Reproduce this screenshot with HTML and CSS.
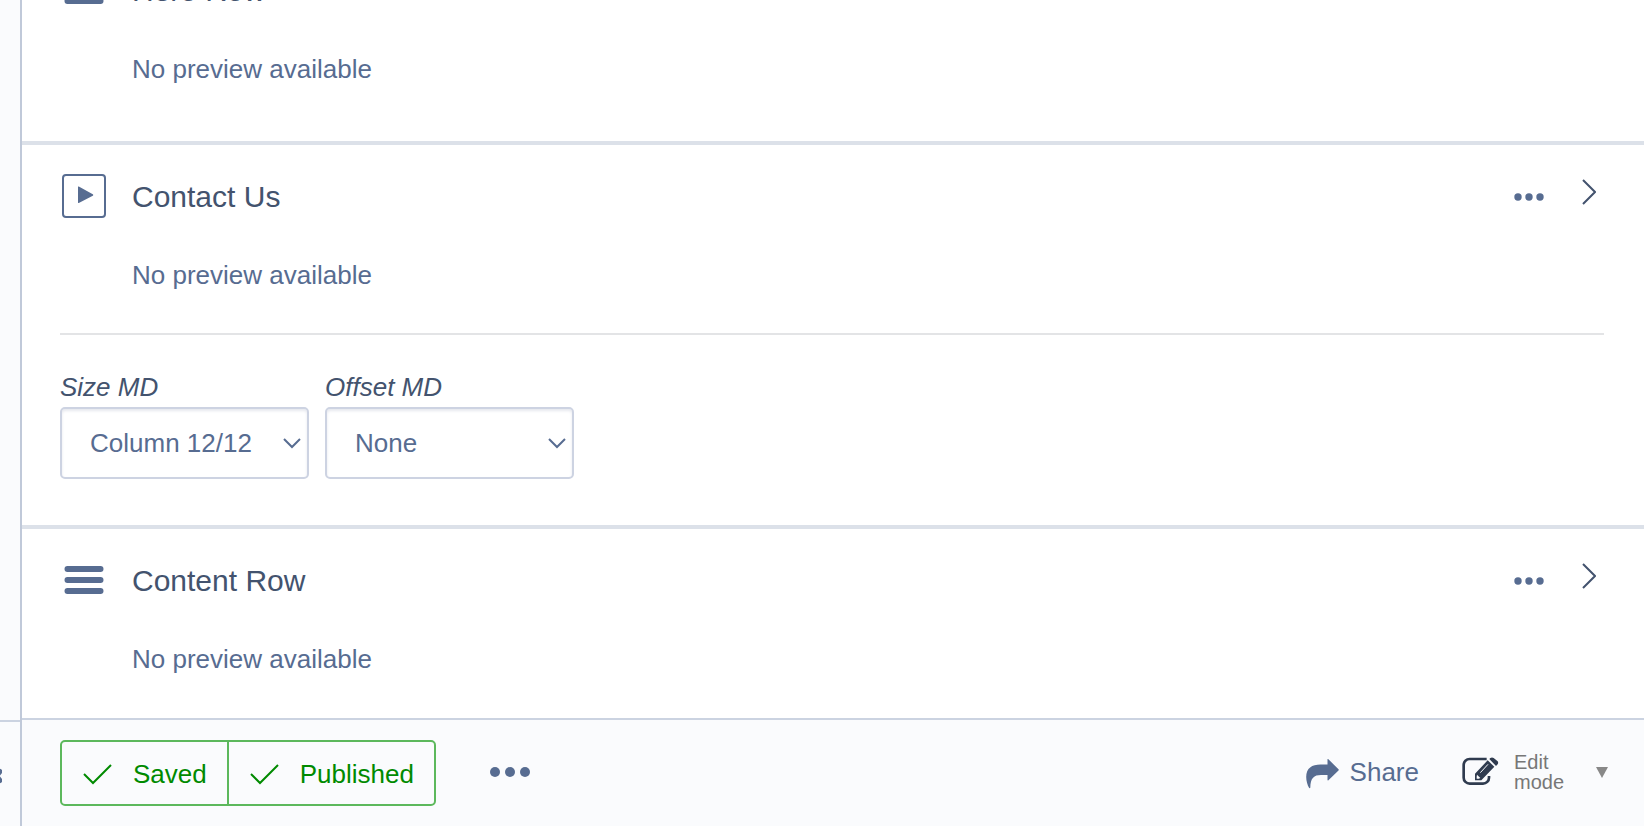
FILE: index.html
```
<!DOCTYPE html>
<html lang="en">
<head>
    <meta charset="UTF-8">
    <meta name="viewport" content="width=device-width, initial-scale=1.0">
    <title>Page Editor</title>
    <link rel="stylesheet" href="styles.css">
</head>
<body>
    <div class="editor">
        <aside class="sidebar">
            <div class="sidebar-tree"></div>
            <div class="sidebar-footer">
                <button class="collapse-btn" type="button" aria-label="Collapse">
                    <svg width="18" height="18" viewBox="0 0 18 18"><path d="M9 3L4 9l5 6M18 3l-5 6 5 6"/></svg>
                </button>
            </div>
        </aside>

        <main class="main">
            <div class="blocks">
                <div class="block-list">
                    <section class="block">
                        <header class="block-header">
                            <svg class="block-icon" viewBox="0 0 44 44"><path class="bar" d="M5.500 11h33M5.500 22h33M5.500 33h33"/></svg>
                            <h3>Hero Row</h3>
                        </header>
                        <p class="preview">No preview available</p>
                    </section>

                    <section class="block">
                        <header class="block-header">
                            <svg class="block-icon" viewBox="0 0 44 44">
                                <rect class="frame" x="1" y="1" width="42" height="42" rx="3"/>
                                <path class="play" d="M16 13v15.500a.5.5 0 0 0 .8.4l14-7.200a.8.8 0 0 0 0-1.400l-14-7.700a.5.5 0 0 0-.8.4z"/>
                            </svg>
                            <h3>Contact Us</h3>
                            <button class="more-btn" type="button" aria-label="More">
                                <svg width="30" height="8" viewBox="0 0 30 8"><circle cx="4" cy="4" r="3.700"/><circle cx="15" cy="4" r="3.700"/><circle cx="26" cy="4" r="3.700"/></svg>
                            </button>
                            <button class="open-btn" type="button" aria-label="Open">
                                <svg width="14" height="26" viewBox="0 0 14 26"><path d="M1 1l12 12L1 25"/></svg>
                            </button>
                        </header>
                        <p class="preview">No preview available</p>
                        <div class="block-options">
                            <div class="field">
                                <label for="size-md">Size MD</label>
                                <div class="select">
                                    <select id="size-md">
                                        <option>Column 12/12</option>
                                    </select>
                                    <svg width="18" height="12" viewBox="0 0 18 12"><path d="M1 2l8 8 8-8"/></svg>
                                </div>
                            </div>
                            <div class="field">
                                <label for="offset-md">Offset MD</label>
                                <div class="select">
                                    <select id="offset-md">
                                        <option>None</option>
                                    </select>
                                    <svg width="18" height="12" viewBox="0 0 18 12"><path d="M1 2l8 8 8-8"/></svg>
                                </div>
                            </div>
                        </div>
                    </section>

                    <section class="block">
                        <header class="block-header">
                            <svg class="block-icon" viewBox="0 0 44 44"><path class="bar" d="M5.500 11h33M5.500 22h33M5.500 33h33"/></svg>
                            <h3>Content Row</h3>
                            <button class="more-btn" type="button" aria-label="More">
                                <svg width="30" height="8" viewBox="0 0 30 8"><circle cx="4" cy="4" r="3.700"/><circle cx="15" cy="4" r="3.700"/><circle cx="26" cy="4" r="3.700"/></svg>
                            </button>
                            <button class="open-btn" type="button" aria-label="Open">
                                <svg width="14" height="26" viewBox="0 0 14 26"><path d="M1 1l12 12L1 25"/></svg>
                            </button>
                        </header>
                        <p class="preview">No preview available</p>
                    </section>
                </div>
            </div>

            <footer class="toolbar">
                <div class="btn-group">
                    <button type="button">
                        <svg width="30" height="22" viewBox="0 0 30 22"><path d="M1 11l9 9L28 2"/></svg>
                        Saved
                    </button>
                    <button type="button">
                        <svg width="30" height="22" viewBox="0 0 30 22"><path d="M1 11l9 9L28 2"/></svg>
                        Published
                    </button>
                </div>
                <button class="more-btn" type="button" aria-label="More actions">
                    <svg width="40" height="10" viewBox="0 0 40 10"><circle cx="5" cy="5" r="5"/><circle cx="20" cy="5" r="5"/><circle cx="35" cy="5" r="5"/></svg>
                </button>
                <button class="share-btn" type="button">
                    <svg width="33" height="34" viewBox="0 -4 33 34"><path d="M21.500 .5C21.500 0 22 0 22.400 .3L32.500 10.200q.6.600 0 1.200L22.400 21.200c-.4.400-.9.200-.9-.3V16H15C8 16 4.500 19 4.300 28.500c0 1-1 1-1.400.1C1.500 26 .2 22 .2 18 .2 9 6 5.500 14.500 5.500h7z"/></svg>
                    Share
                </button>
                <button class="mode-btn" type="button">
                    <svg class="edit-icon" width="38" height="31" viewBox="20 34 114 93">
                        <path class="sheet" d="M97 40H46a18 18 0 0 0-18 18v38a18 18 0 0 0 18 18h40a18 18 0 0 0 18-18V91"/>
                        <path class="pencil" d="M62 84L100 44l20 19L81 104H62zM105 40l3-3q5-3 10 0l12 10q3 4 0 9l-5 5z"/>
                        <path class="nib" d="M68 87l10 10-5 2h-6v-6z"/>
                        <path class="shine" d="M78 81L101 56"/>
                    </svg>
                    <span>Edit<br>mode</span>
                    <svg class="caret" width="12" height="11" viewBox="0 0 12 11"><path d="M0 0h12L6 11z"/></svg>
                </button>
            </footer>
        </main>
    </div>
</body>
</html>
```
FILE: styles.css
```
* {
    box-sizing: border-box;
}

body {
    margin: 0;
    font-family: "Liberation Sans", Arial, sans-serif;
    font-size: 26px;
    line-height: 30px;
    color: #576c91;
    background-color: #fff;
}

button {
    display: flex;
    align-items: center;
    padding: 0;
    border: 0;
    background: none;
    font: inherit;
    color: inherit;
    cursor: pointer;
}

svg {
    display: block;
    flex: none;
    fill: none;
}

.editor {
    display: flex;
    height: 100vh;
    overflow: hidden;
}

.sidebar {
    display: flex;
    flex-direction: column;
    flex: none;
    width: 22px;
    border-right: 2px solid #c0c9d9;
    background-color: #fafbfd;
}

.sidebar-tree {
    flex: 1;
}

.sidebar-footer {
    display: flex;
    justify-content: flex-end;
    align-items: center;
    height: 106px;
    padding-top: 4px;
    padding-right: 18px;
    border-top: 2px solid #cbd3e1;
    overflow: hidden;
}

.collapse-btn svg {
    stroke: #576c91;
    stroke-width: 4;
}

.main {
    display: flex;
    flex-direction: column;
    flex: 1;
    min-width: 0;
}

/* blocks */
.blocks {
    flex: 1;
    min-height: 0;
    overflow: hidden;
}

/* scrolled part way down the first block */
.block-list {
    margin-top: -61px;
}

.block {
    padding: 29px 40px 57px 38px;
    border-bottom: 4px solid #dce1e9;
}

.block-header {
    display: flex;
    align-items: center;
    height: 46px;
    padding-left: 2px;
}

.block-icon {
    align-self: flex-start;
    width: 44px;
    height: 44px;
    margin-right: 26px;
}

.block-icon .bar {
    stroke: #576c91;
    stroke-width: 6;
    stroke-linecap: round;
}

.block-icon .frame {
    stroke: #576c91;
    stroke-width: 2;
}

.block-icon .play {
    fill: #576c91;
}

.block-header h3 {
    flex: 1;
    margin: 0;
    font-size: 30px;
    font-weight: normal;
    line-height: 44px;
    color: #43536e;
}

.more-btn svg {
    fill: #576c91;
}

.open-btn {
    height: 36px;
    margin-left: 38px;
    margin-right: 8px;
    align-self: flex-start;
}

.open-btn svg {
    stroke: #43536e;
    stroke-width: 2;
}

.preview {
    margin: 40px 0 0 72px;
}

.block-options {
    display: flex;
    gap: 16px;
    margin-top: 43px;
    margin-bottom: -11px;
    padding-top: 36px;
    border-top: 2px solid #e3e4e6;
}

.field label {
    display: block;
    margin-bottom: 4px;
    line-height: 32px;
    font-style: italic;
    color: #43536e;
}

.select {
    display: grid;
    align-items: center;
    width: 249px;
}

.select select,
.select svg {
    grid-area: 1 / 1;
}

.select select {
    appearance: none;
    height: 72px;
    padding: 0 28px;
    border: 2px solid #cdd3e2;
    border-radius: 5px;
    background-color: #fff;
    box-shadow: inset 0 2px 3px #e6e8ee;
    font: inherit;
    color: inherit;
}

.select svg {
    justify-self: end;
    margin-right: 8px;
    stroke: #576c91;
    stroke-width: 2;
    pointer-events: none;
}

/* toolbar */
.toolbar {
    display: flex;
    align-items: center;
    flex: none;
    height: 108px;
    padding: 0 36px 0 38px;
    border-top: 2px solid #cbd3e1;
    background-color: #fafbfd;
}

.toolbar > button {
    padding-bottom: 2px;
}

.btn-group {
    display: flex;
    border: 2px solid #5cb85c;
    border-radius: 5px;
    color: #008a00;
}

.btn-group button {
    height: 62px;
    padding: 2px 20px 0 21px;
    gap: 20px;
}

.btn-group button + button {
    border-left: 2px solid #5cb85c;
}

.btn-group svg {
    stroke: #008a00;
    stroke-width: 2;
}

.toolbar .more-btn {
    margin-left: 54px;
}

.share-btn {
    gap: 11px;
    margin-left: auto;
}

.share-btn svg {
    fill: #576c91;
}

.mode-btn {
    margin-left: 42px;
    font-size: 20px;
    line-height: 20px;
    text-align: left;
    color: #777;
}

.mode-btn span {
    margin: 0 32px 0 15px;
}

.edit-icon .sheet {
    stroke: #2f3b4f;
    stroke-width: 8;
}

.edit-icon .pencil {
    fill: #2f3b4f;
}

.edit-icon .nib {
    fill: #fafbfd;
}

.edit-icon .shine {
    stroke: #fafbfd;
    stroke-width: 3;
}

.caret {
    fill: #888;
}
```
